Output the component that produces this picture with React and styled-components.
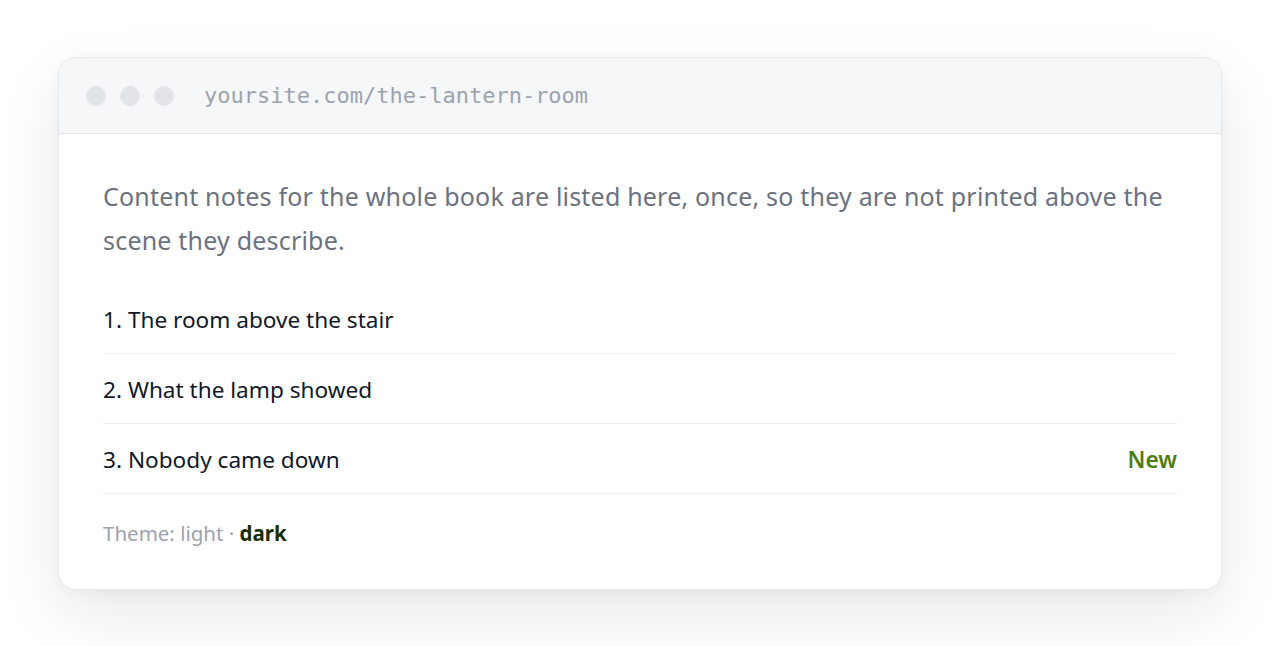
import React from 'react';
import styled, { createGlobalStyle } from 'styled-components';

const GlobalStyle = createGlobalStyle`
    html, body {
        margin: 0;
        padding: 0;
        background: #ffffff;
    }

    body {
        font-family: 'Noto Sans', 'Open Sans', sans-serif;
    }
`;

const Page = styled.div`
    min-height: 646px;
    box-sizing: border-box;
    padding: 57px 58px 40px;
`;

const Window = styled.div`
    background: #ffffff;
    border: 1px solid #e5e7eb;
    border-radius: 18px;
    overflow: hidden;
    box-shadow: 0 24px 64px rgba(0, 0, 0, 0.09), 0 4px 14px rgba(0, 0, 0, 0.03);
`;

const Toolbar = styled.div`
    display: flex;
    align-items: center;
    height: 75px;
    padding: 0 27px;
    background: #f6f7f8;
    border-bottom: 1px solid #e5e7eb;
`;

const Dots = styled.div`
    display: flex;
    gap: 14px;
    margin-right: 30px;
`;

const Dot = styled.span`
    width: 20px;
    height: 20px;
    border-radius: 50%;
    background: #e1e4e8;
`;

const Address = styled.span`
    font-family: 'DejaVu Sans Mono', 'Liberation Mono', monospace;
    font-size: 22px;
    color: #9ca3af;
`;

const Body = styled.div`
    padding: 40px 44px 41px;
`;

const Intro = styled.p`
    margin: 0 0 22px;
    font-size: 25px;
    letter-spacing: 0.2px;
    line-height: 44px;
    color: #6b7280;
`;

const List = styled.ol`
    list-style: none;
    margin: 0;
    padding: 0;
`;

const Row = styled.li`
    display: flex;
    justify-content: space-between;
    align-items: center;
    box-sizing: border-box;
    height: 70px;
    padding-top: 2px;
    border-bottom: 1px solid #ededed;
    font-size: 22.6px;
    color: #111827;
`;

const Badge = styled.span`
    font-weight: 600;
    color: #4d7c0f;
`;

const Footer = styled.p`
    margin: 24px 0 0;
    font-size: 20.5px;
    line-height: 30px;
    color: #9ca3af;
`;

const Current = styled.strong`
    font-weight: 700;
    color: #1a2e05;
`;

const chapters = [
    { title: 'The room above the stair' },
    { title: 'What the lamp showed' },
    { title: 'Nobody came down', fresh: true },
];

export default function App() {
    return (
        <>
            <GlobalStyle />
            <Page>
                <Window>
                    <Toolbar>
                        <Dots>
                            <Dot />
                            <Dot />
                            <Dot />
                        </Dots>
                        <Address>yoursite.com/the-lantern-room</Address>
                    </Toolbar>
                    <Body>
                        <Intro>
                            Content notes for the whole book are listed here, once, so they are not
                            printed above the scene they describe.
                        </Intro>
                        <List>
                            {chapters.map((c, i) => (
                                <Row key={c.title}>
                                    <span>{i + 1}. {c.title}</span>
                                    {c.fresh && <Badge>New</Badge>}
                                </Row>
                            ))}
                        </List>
                        <Footer>
                            Theme: light · <Current>dark</Current>
                        </Footer>
                    </Body>
                </Window>
            </Page>
        </>
    );
}
